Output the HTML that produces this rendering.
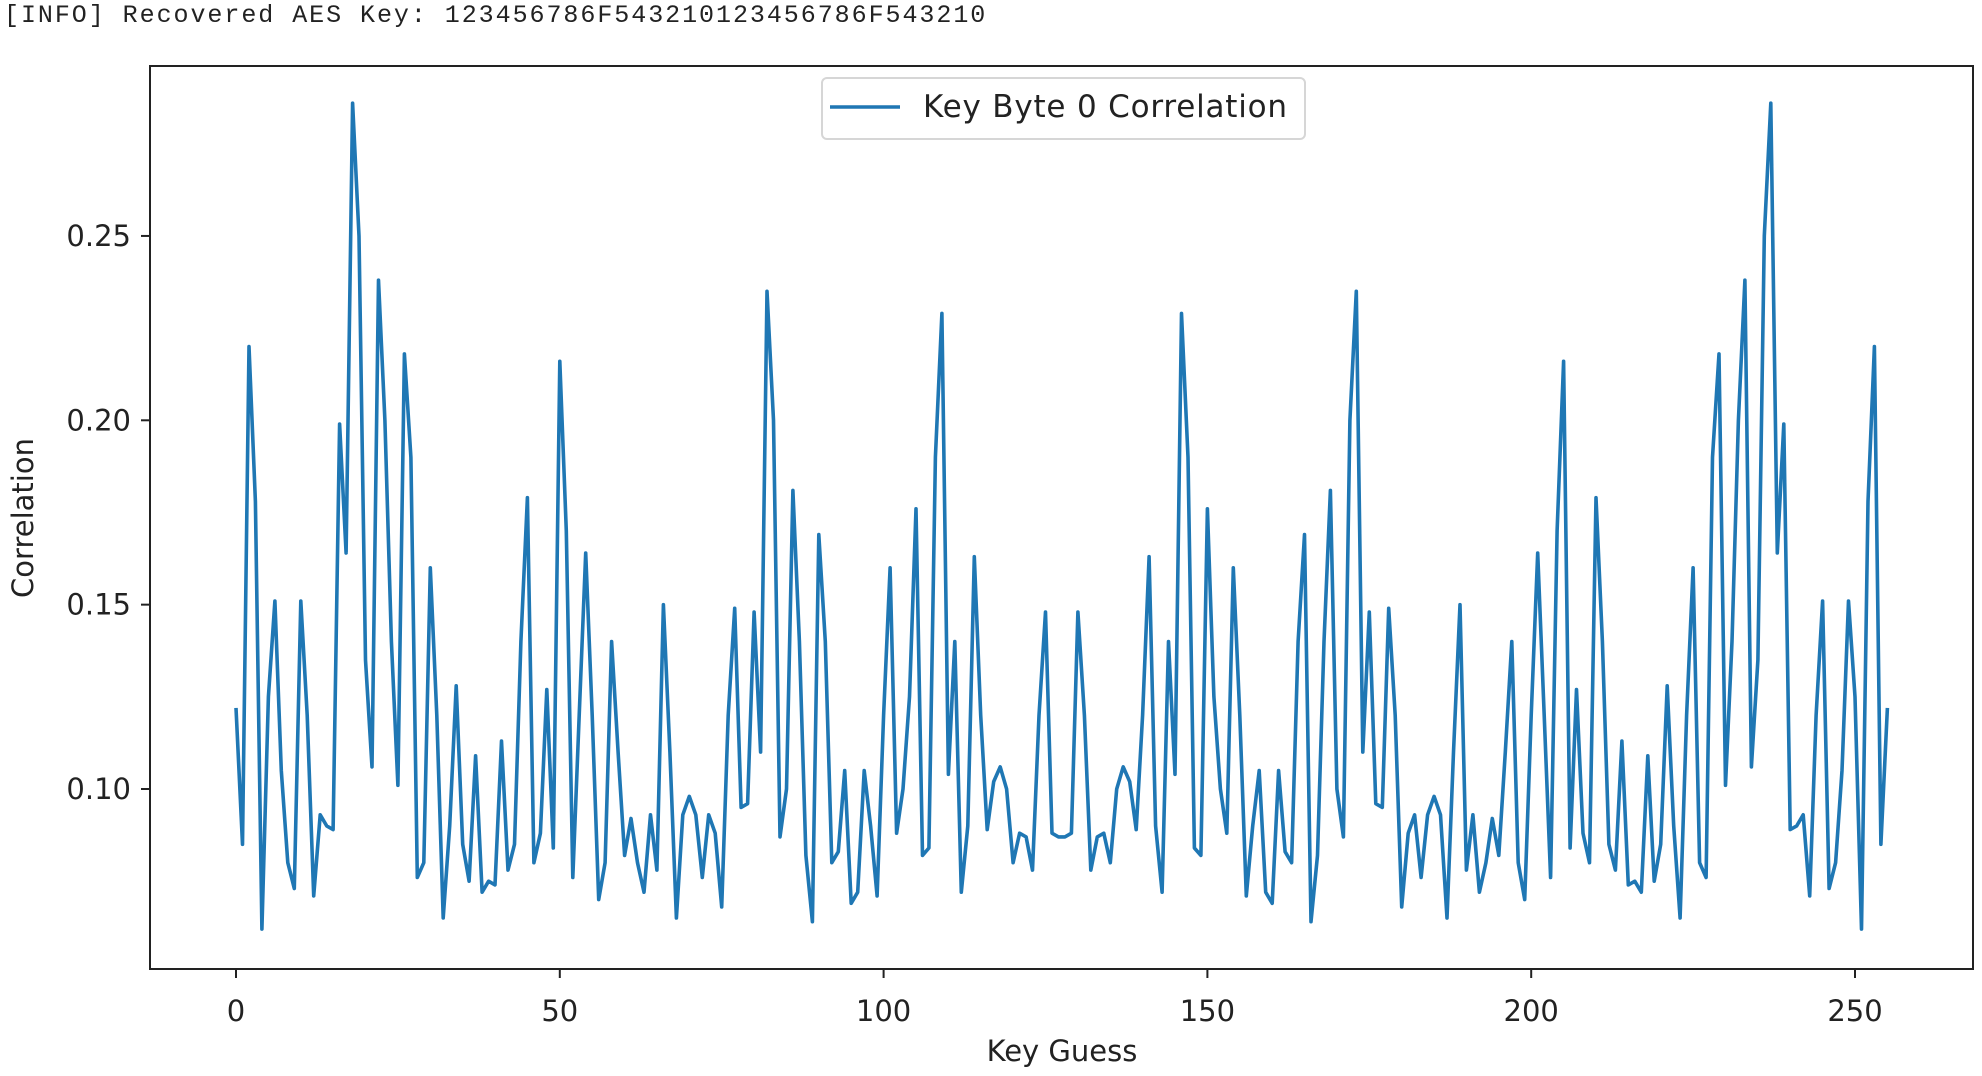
<!DOCTYPE html>
<html><head><meta charset="utf-8"><style>
html,body{margin:0;padding:0;background:#fff;width:1982px;height:1076px;overflow:hidden}
.info{position:absolute;left:4px;top:1px;font-family:"Liberation Mono",monospace;font-size:25px;letter-spacing:1.95px;color:#222;white-space:nowrap}
svg{position:absolute;left:0;top:0}
</style></head><body>
<div class="info">[INFO] Recovered AES Key: 123456786F543210123456786F543210</div>
<svg id="s" width="1982" height="1076" xmlns="http://www.w3.org/2000/svg" font-family="DejaVu Sans, Liberation Sans, sans-serif">
<rect x="150" y="66" width="1823" height="903" fill="none" stroke="#222" stroke-width="2"/>
<polyline id="pl" fill="none" stroke="#1f77b4" stroke-width="3.6" stroke-linejoin="round" points=""/>
<g stroke="#222" stroke-width="2" id="ticks"></g>
<g font-size="29" fill="#222" id="labels"></g>
<text x="1062" y="1061" font-size="29" text-anchor="middle" fill="#222">Key Guess</text>
<text x="0" y="0" font-size="29" text-anchor="middle" fill="#222" transform="translate(33,518) rotate(-90)">Correlation</text>
<rect x="822" y="78" width="483" height="61" rx="5" fill="#fff" fill-opacity="0.9" stroke="#d6d6d6" stroke-width="2"/>
<line x1="830" y1="107" x2="900" y2="107" stroke="#1f77b4" stroke-width="3.6"/>
<text x="923" y="117" font-size="31" letter-spacing="0.8" fill="#222">Key Byte 0 Correlation</text>
</svg>
<script>
var h=[0.122,0.085,0.220,0.178,0.062,0.125,0.151,0.105,0.080,0.073,0.151,0.12,0.071,0.093,0.090,0.089,0.199,0.164,0.286,0.25,0.135,0.106,0.238,0.20,0.14,0.101,0.218,0.19,0.076,0.080,0.160,0.12,0.065,0.09,0.128,0.085,0.075,0.109,0.072,0.075,0.074,0.113,0.078,0.085,0.14,0.179,0.080,0.088,0.127,0.084,0.216,0.17,0.076,0.12,0.164,0.12,0.070,0.080,0.140,0.11,0.082,0.092,0.080,0.072,0.093,0.078,0.150,0.11,0.065,0.093,0.098,0.093,0.076,0.093,0.088,0.068,0.12,0.149,0.095,0.096,0.148,0.110,0.235,0.20,0.087,0.10,0.181,0.14,0.082,0.064,0.169,0.14,0.080,0.083,0.105,0.069,0.072,0.105,0.09,0.071,0.12,0.160,0.088,0.10,0.125,0.176,0.082,0.084,0.19,0.229,0.104,0.140,0.072,0.090,0.163,0.12,0.089,0.102,0.106,0.10,0.080,0.088,0.087,0.078,0.12,0.148,0.088,0.087];
var v=h.slice();for(var k=127;k>=0;k--)v.push(h[k]);
function X(k){return 236+k*6.476}function Y(t){return 789-(t-0.10)*3687}
var p=[];for(var i=0;i<256;i++)p.push(X(i).toFixed(1)+","+Y(v[i]).toFixed(1));
document.getElementById("pl").setAttribute("points",p.join(" "));
var ns="http://www.w3.org/2000/svg",tg=document.getElementById("ticks"),lg=document.getElementById("labels");
function el(g,n,a,t){var e=document.createElementNS(ns,n);for(var q in a)e.setAttribute(q,a[q]);if(t)e.textContent=t;g.appendChild(e);}
for(var j=0;j<=5;j++){var x=X(j*50);el(tg,"line",{x1:x,y1:969,x2:x,y2:978});el(lg,"text",{x:x,y:1021,"text-anchor":"middle"},String(j*50));}
[0.10,0.15,0.20,0.25].forEach(function(t){var y=Y(t);el(tg,"line",{x1:141,y1:y,x2:150,y2:y});el(lg,"text",{x:131,y:y+10,"text-anchor":"end"},t.toFixed(2));});
</script>
</body></html>
